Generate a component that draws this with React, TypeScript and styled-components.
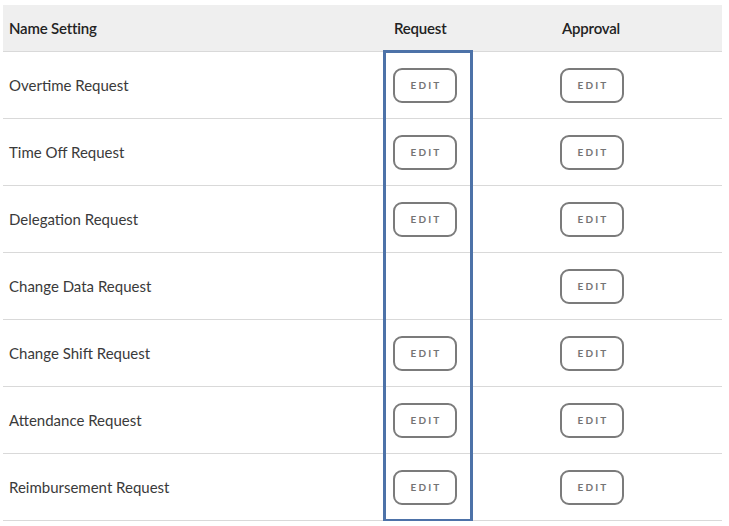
import React from 'react';
import styled, { createGlobalStyle } from 'styled-components';

const GlobalStyle = createGlobalStyle`
    html, body {
        margin: 0;
        padding: 0;
        background: #ffffff;
    }
    body {
        font-family: Lato, "Open Sans", "Liberation Sans", sans-serif;
        color: #333333;
    }
`;

const Page = styled.div`
    padding: 5px 7px 0 3px;
`;

const Table = styled.div`
    position: relative;
    width: 719px;
`;

const Row = styled.div<{ $head?: boolean }>`
    display: grid;
    grid-template-columns: 380px 90px 1fr;
    align-items: center;
    height: ${({ $head }) => ($head ? '46px' : '66px')};
    border-bottom: 1px solid #d9d9d9;
    background: ${({ $head }) => ($head ? '#efefef' : '#ffffff')};
`;

const NameCell = styled.div`
    padding-left: 6px;
    font-size: 15px;
    color: #3a3a3a;
`;

const HeadText = styled.div<{ $indent: number }>`
    padding-left: ${({ $indent }) => $indent}px;
    font-size: 15px;
    font-weight: 600;
    color: #222222;
    letter-spacing: -0.2px;
`;

const ActionCell = styled.div<{ $indent: number }>`
    padding-left: ${({ $indent }) => $indent}px;
    display: flex;
    align-items: center;
`;

const EditButton = styled.button`
    width: 64px;
    height: 35px;
    box-sizing: border-box;
    border: 2px solid #7b7b7b;
    border-radius: 9px;
    background: #ffffff;
    color: #747474;
    font-family: Lato, "Open Sans", "Liberation Sans", sans-serif;
    font-size: 10px;
    font-weight: 700;
    letter-spacing: 2.2px;
    padding: 0 0 0 2px;
    cursor: pointer;
`;

const Highlight = styled.div`
    position: absolute;
    left: 380px;
    top: 45px;
    width: 90px;
    height: 472px;
    box-sizing: border-box;
    border: 3px solid #4d72a8;
    pointer-events: none;
`;

interface Setting {
    name: string;
    request: boolean;
    approval: boolean;
}

const settings: Setting[] = [
    { name: 'Overtime Request', request: true, approval: true },
    { name: 'Time Off Request', request: true, approval: true },
    { name: 'Delegation Request', request: true, approval: true },
    { name: 'Change Data Request', request: false, approval: true },
    { name: 'Change Shift Request', request: true, approval: true },
    { name: 'Attendance Request', request: true, approval: true },
    { name: 'Reimbursement Request', request: true, approval: true },
];

export default function App() {
    return (
        <Page>
            <GlobalStyle />
            <Table>
                <Row $head>
                    <HeadText $indent={6}>Name Setting</HeadText>
                    <HeadText $indent={11}>Request</HeadText>
                    <HeadText $indent={89}>Approval</HeadText>
                </Row>
                {settings.map((s) => (
                    <Row key={s.name}>
                        <NameCell>{s.name}</NameCell>
                        <ActionCell $indent={10}>{s.request && <EditButton>EDIT</EditButton>}</ActionCell>
                        <ActionCell $indent={87}>{s.approval && <EditButton>EDIT</EditButton>}</ActionCell>
                    </Row>
                ))}
                <Highlight />
            </Table>
        </Page>
    );
}
